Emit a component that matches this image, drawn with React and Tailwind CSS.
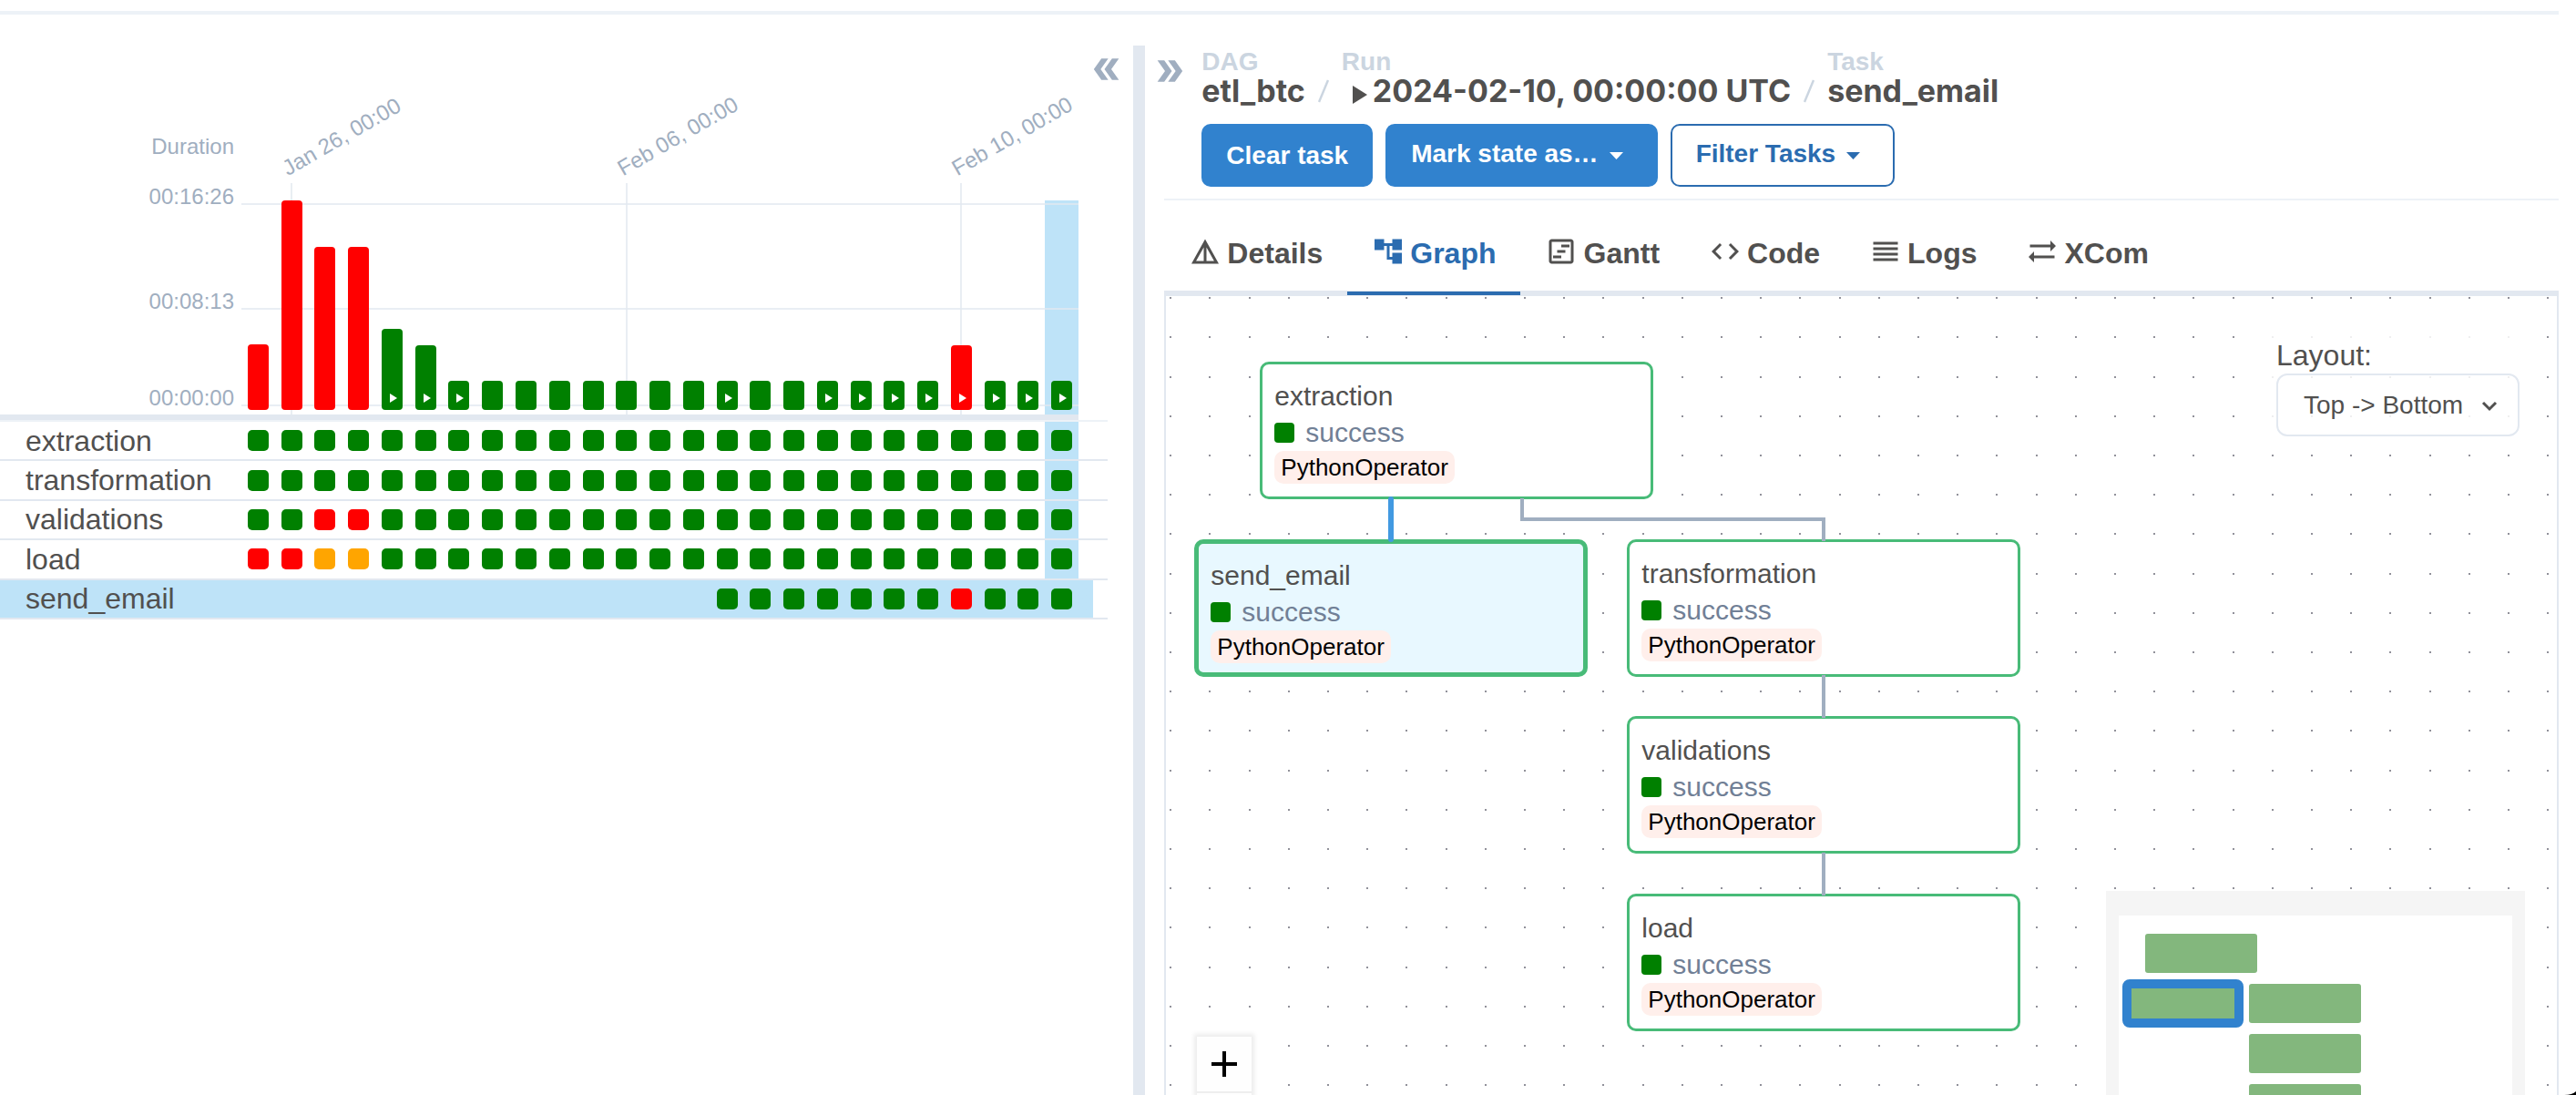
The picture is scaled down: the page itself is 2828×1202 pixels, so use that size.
import React from "react";
import {
  MdAccountTree,
  MdCode,
  MdDetails,
  MdDoubleArrow,
  MdOutlineViewTimeline,
  MdReorder,
  MdSyncAlt,
} from "react-icons/md";

const GREEN = "bg-[#008000]";
const RED = "bg-[#ff0000]";
const ORANGE = "bg-[#ffa500]";

const manual = [4, 5, 6, 14, 17, 18, 19, 20, 21, 22, 23, 24];
const heights = { 0: 72, 1: 230, 2: 179, 3: 179, 4: 89, 5: 71, 21: 71 };
const ticks = { 1: "Jan 26, 00:00", 11: "Feb 06, 00:00", 21: "Feb 10, 00:00" };

const runs = Array.from({ length: 25 }, (_, i) => ({
  height: heights[i] ?? 32,
  color: i < 4 || i === 21 ? RED : GREEN,
  manual: manual.includes(i),
  tick: ticks[i],
  selected: i === 24,
}));

const row = (name, overrides = {}, from = 0) => ({
  name,
  cells: runs.map((_, i) => (i < from ? null : overrides[i] ?? GREEN)),
});

const tasks = [
  row("extraction"),
  row("transformation"),
  row("validations", { 2: RED, 3: RED }),
  row("load", { 0: RED, 1: RED, 2: ORANGE, 3: ORANGE }),
  row("send_email", { 21: RED }, 14),
];

function DurationChart() {
  return (
    <div className="flex pr-[60px]">
      <div className="flex w-[265px] shrink-0 flex-col border-b-6 border-[#e2e8f0] pt-[49px] pr-2 text-right text-2xl/8 text-[#a0aec0]">
        <span>Duration</span>
        <span className="mt-[23px]">00:16:26</span>
        <span className="mt-[83px]">00:08:13</span>
        <span className="mt-[74px] mb-[2px]">00:00:00</span>
      </div>
      <div className="relative flex flex-1 items-end border-b-6 border-[#e2e8f0]">
        {runs.map((run, i) => (
          <div
            key={i}
            className={`relative flex h-[235px] flex-1 items-end justify-center pb-[5px] ${run.selected ? "bg-[#bee3f8]" : ""}`}
          >
            {run.tick && (
              <>
                <span className="absolute -top-[19px] bottom-0 left-1/2 -ml-px w-[2px] bg-[#e9eef3]" />
                <span className="absolute bottom-[258px] left-1/2 -ml-[2px] origin-bottom-left -rotate-30 text-2xl/6 whitespace-nowrap text-[#a0aec0]">
                  {run.tick}
                </span>
              </>
            )}
            <div
              className={`relative z-10 flex w-[23px] items-end justify-center rounded-[4px] pb-2 pl-[3px] ${run.color}`}
              style={{ height: run.height }}
            >
              {run.manual && (
                <svg viewBox="0 0 8 10" className="h-[10px] w-2 fill-white" aria-hidden="true">
                  <path d="M0 0L8 5L0 10Z" />
                </svg>
              )}
            </div>
          </div>
        ))}
        <span className="absolute right-0 bottom-[230px] left-0 h-[2px] bg-[#e2e8f0]/75" />
        <span className="absolute right-0 bottom-[115px] left-0 h-[2px] bg-[#e2e8f0]/75" />
        <span className="absolute right-0 bottom-[9px] left-0 h-[2px] bg-[#e2e8f0]/75" />
      </div>
    </div>
  );
}

function TaskGrid() {
  return (
    <div className="pr-[28px]">
      <table className="h-[219px] w-full table-fixed border-collapse border-t-2 border-[#edf2f7]">
        <colgroup>
          <col className="w-[265px]" />
          {runs.map((_, i) => (
            <col key={i} />
          ))}
          <col className="w-8" />
        </colgroup>
        <tbody>
          {tasks.map((task) => {
            const active = task.name === "send_email";
            return (
              <tr key={task.name} className="border-b-2 border-[#e2e8f0]">
                <th
                  scope="row"
                  className={`p-0 pl-7 text-left text-[32px]/9 font-normal ${active ? "bg-[#bee3f8]" : ""}`}
                >
                  {task.name}
                </th>
                {task.cells.map((color, i) => (
                  <td key={i} className={`p-0 ${active || i === 24 ? "bg-[#bee3f8]" : ""}`}>
                    {color && <div className={`mx-auto size-[23px] rounded-[5px] ${color}`} />}
                  </td>
                ))}
                <td
                  className={`p-0 ${active ? "bg-linear-to-r from-[#bee3f8] from-50% to-transparent to-50%" : ""}`}
                />
              </tr>
            );
          })}
        </tbody>
      </table>
    </div>
  );
}

function Crumb({ label, children }) {
  return (
    <li className="flex flex-col">
      <span className="text-[28px]/7 font-bold text-[#cbd5e0]">{label}</span>
      <a href="#" className="flex items-center font-['Inter',sans-serif] text-[34px]/9 font-bold">
        {children}
      </a>
    </li>
  );
}

function Slash() {
  return (
    <li aria-hidden="true" className="px-[14px]">
      <svg viewBox="0 0 12 36" className="h-9 w-3 stroke-[#cbd5e0]" strokeWidth="2.5" fill="none">
        <path d="M1 30L11 6" />
      </svg>
    </li>
  );
}

function Caret() {
  return (
    <svg viewBox="0 0 15 8" className="mt-1 h-2 w-[15px] fill-current" aria-hidden="true">
      <path d="M0 0H15L7.500 8Z" />
    </svg>
  );
}

const tabs = [
  { name: "Details", icon: MdDetails },
  { name: "Graph", icon: MdAccountTree },
  { name: "Gantt", icon: MdOutlineViewTimeline },
  { name: "Code", icon: MdCode },
  { name: "Logs", icon: MdReorder },
  { name: "XCom", icon: MdSyncAlt },
];

function Tabs() {
  return (
    <div role="tablist" className="flex h-[105px] border-b-6 border-[#e2e8f0]">
      {tabs.map(({ name, icon: Icon }) => {
        const active = name === "Graph";
        return (
          <button
            key={name}
            type="button"
            role="tab"
            aria-selected={active}
            className={`relative flex items-center gap-[6px] px-[27px] pt-[17px] text-[32px]/9 font-bold ${active ? "text-[#2b6cb0]" : ""}`}
          >
            <Icon className="mb-1 size-9" aria-hidden="true" />
            {name}
            {active && <span className="absolute inset-x-0 -bottom-[5px] h-1 bg-[#2b6cb0]" />}
          </button>
        );
      })}
    </div>
  );
}

const dots = [0, 43, 87, 130, 173];

const nodes = [
  { name: "extraction", place: "left-[103px] top-[72px]" },
  { name: "send_email", place: "left-[31px] top-[267px]", selected: true },
  { name: "transformation", place: "left-[506px] top-[267px]" },
  { name: "validations", place: "left-[506px] top-[461px]" },
  { name: "load", place: "left-[506px] top-[656px]" },
];

function Node({ name, place, selected }) {
  return (
    <div
      className={`absolute ${place} h-[151px] w-[432px] rounded-[10px] border-[#48bb78] px-[13px] pt-[15px] ${
        selected ? "border-5 bg-[#e8f8ff]" : "border-3 bg-white"
      }`}
    >
      <div className="text-[30px]/10">{name}</div>
      <div className="flex h-10 items-center text-[30px]/10 text-[#718096]">
        <span className="mr-3 size-[22px] rounded-[4px] bg-[#008000]" />
        success
      </div>
      <span className="inline-block rounded-[10px] bg-[#ffefeb] px-[7px] text-[26px]/9 text-black">
        PythonOperator
      </span>
    </div>
  );
}

function Graph() {
  return (
    <div className="relative flex-1 overflow-hidden border-x-2 border-[#e2e8f0]">
      <svg className="absolute inset-0 size-full" aria-hidden="true">
        <defs>
          <pattern id="dots" x="4" y="1" width="216" height="216" patternUnits="userSpaceOnUse">
            {dots.map((y) => dots.map((x) => <rect key={`${x}-${y}`} x={x} y={y} width="2" height="2" fill="#91919a" />))}
          </pattern>
        </defs>
        <rect width="100%" height="100%" fill="url(#dots)" />
      </svg>

      {nodes.map((node) => (
        <Node key={node.name} {...node} />
      ))}

      <svg className="absolute inset-0 size-full" fill="none" aria-hidden="true">
        <g stroke="#a0aec0" strokeWidth="4">
          <path d="M391 222V245H722V269" />
          <path d="M722 416V463" />
          <path d="M722 611V658" />
        </g>
        <path d="M247 223V267" stroke="#4299e1" strokeWidth="6" strokeLinecap="round" />
      </svg>

      <div className="absolute top-9 right-8 flex flex-col bg-white/85 p-[9px]">
        <label htmlFor="layout" className="text-[32px]/10">
          Layout:
        </label>
        <div className="relative">
          <select
            id="layout"
            className="h-[69px] w-[267px] appearance-none rounded-[12px] border-2 border-[#e2e8f0] bg-transparent pl-7 text-[28px]/8"
          >
            <option>Top -&gt; Bottom</option>
          </select>
          <svg
            viewBox="0 0 18 12"
            className="pointer-events-none absolute top-[30px] right-[24px] h-3 w-[18px] stroke-current"
            fill="none"
            strokeWidth="3"
            aria-hidden="true"
          >
            <path d="M2 2L9 9L16 2" />
          </svg>
        </div>
      </div>

      <svg viewBox="0 0 460 224" className="absolute right-[35px] bottom-0 h-[224px] w-[460px]" role="img" aria-label="Minimap">
        <rect width="460" height="224" fill="#f5f5f5" />
        <rect x="14" y="27" width="432" height="197" fill="#fff" />
        <g fill="#83b77d">
          <rect x="43" y="47" width="123" height="43" rx="3" />
          <rect x="23" y="102" width="123" height="43" rx="3" stroke="#3182ce" strokeWidth="10" />
          <rect x="157" y="102" width="123" height="43" rx="3" />
          <rect x="157" y="157" width="123" height="43" rx="3" />
          <rect x="157" y="212" width="123" height="43" rx="3" />
        </g>
      </svg>

      <div className="absolute bottom-0 left-[34px] w-[60px] bg-[#fefefe] pb-[2px] shadow-[0_0_5px_3px_rgba(0,0,0,0.08)]">
        <button
          type="button"
          aria-label="Zoom in"
          className="flex h-[62px] w-full items-center justify-center border-b-2 border-[#eeeeee]"
        >
          <svg viewBox="0 0 28 28" className="size-7 stroke-black" strokeWidth="4" aria-hidden="true">
            <path d="M14 0V28M0 14H28" />
          </svg>
        </button>
      </div>
    </div>
  );
}

export default function App() {
  return (
    <div className="relative flex h-screen flex-col overflow-hidden bg-white font-['Liberation_Sans',Arial,sans-serif] text-[#51504f]">
      <div className="mr-[19px] h-4 shrink-0 border-b-4 border-[#edf2f7]" />
      <main className="mt-[34px] flex min-h-0 flex-1">
        <section className="w-[44%] shrink-0">
          <div className="flex justify-end pt-[6px] pr-[9px]">
            <button type="button" aria-label="Collapse grid" className="text-[#a0aec0]">
              <MdDoubleArrow className="size-10 rotate-180" />
            </button>
          </div>
          <DurationChart />
          <TaskGrid />
        </section>
        <div className="w-[13px] shrink-0 bg-[#e2e8f0]" />
        <section className="flex min-w-0 flex-1 flex-col">
          <header className="flex gap-[15px] pt-1 pl-[7px]">
            <button type="button" aria-label="Collapse details" className="mt-1 self-start text-[#a0aec0]">
              <MdDoubleArrow className="size-10" />
            </button>
            <div>
              <nav aria-label="Breadcrumb">
                <ol className="flex items-end">
                  <Crumb label="DAG">etl_btc</Crumb>
                  <Slash />
                  <Crumb label="Run">
                    <svg viewBox="0 0 16 20" className="mt-2 mr-[6px] ml-3 h-5 w-4 fill-current" aria-hidden="true">
                      <path d="M0 0L16 10L0 20Z" />
                    </svg>
                    2024-02-10, 00:00:00 UTC
                  </Crumb>
                  <Slash />
                  <Crumb label="Task">send_email</Crumb>
                </ol>
              </nav>
              <div className="mt-[18px] flex gap-[14px] text-[28px]/8 font-bold">
                <button type="button" className="h-[69px] rounded-[10px] bg-[#3182ce] px-[27px] text-white">
                  Clear task
                </button>
                <button
                  type="button"
                  className="flex h-[69px] items-center gap-3 rounded-[10px] bg-[#3182ce] pr-[38px] pb-1 pl-7 text-white"
                >
                  Mark state as…
                  <Caret />
                </button>
                <button
                  type="button"
                  className="flex h-[69px] items-center gap-3 rounded-[10px] border-2 border-[#2b6cb0] pr-9 pb-1 pl-[26px] text-[#2b6cb0]"
                >
                  Filter Tasks
                  <Caret />
                </button>
              </div>
            </div>
          </header>
          <div className="mt-[13px] mr-[19px] ml-[21px] flex min-h-0 flex-1 flex-col border-t-2 border-[#edf2f7]">
            <Tabs />
            <Graph />
          </div>
        </section>
      </main>
      <svg viewBox="0 0 13 4" className="absolute right-0 bottom-0 h-1 w-[13px] fill-black" aria-hidden="true">
        <path d="M0 4Q9 4 13 0V4Z" />
      </svg>
    </div>
  );
}
